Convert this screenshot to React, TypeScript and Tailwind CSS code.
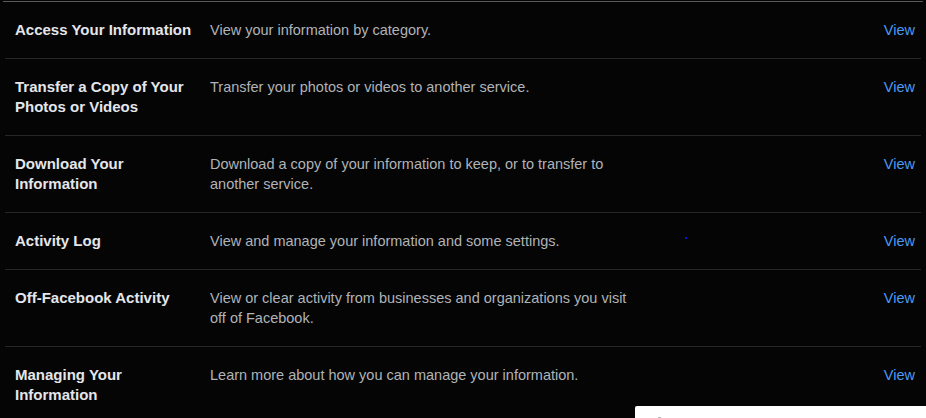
const rows = [
  { title: 'Access Your Information', desc: 'View your information by category.' },
  { title: 'Transfer a Copy of Your Photos or Videos', desc: 'Transfer your photos or videos to another service.' },
  { title: 'Download Your Information', desc: 'Download a copy of your information to keep, or to transfer to another service.' },
  { title: 'Activity Log', desc: 'View and manage your information and some settings.' },
  { title: 'Off-Facebook Activity', desc: 'View or clear activity from businesses and organizations you visit off of Facebook.' },
  { title: 'Managing Your Information', desc: 'Learn more about how you can manage your information.' },
];

export default function App() {
  return (
    <div className="relative w-[926px] h-[418px] overflow-hidden bg-[#050505] font-['Liberation_Sans',Arial,sans-serif] leading-[20px]">
      <div className="mx-[3px] mt-px border-t border-[#5a5a5a]">
        {rows.map((r, i) => (
          <div
            key={r.title}
            className={`mx-[2px] flex items-start pt-[18px] pb-[18px] ${i < rows.length - 1 ? 'border-b border-[#262626]' : ''}`}
          >
            <div className="w-[205px] shrink-0 pl-[10px] pr-[14px] text-[15px] font-bold text-[#e4e6eb]">{r.title}</div>
            <div className="w-[430px] shrink-0 text-[14.5px] text-[#b0b3b8]">{r.desc}</div>
            <a href="#" className="ml-auto mr-[6px] text-[14.5px] text-[#4c9bf2]">View</a>
          </div>
        ))}
      </div>
      {/* stray cursor dot */}
      <div className="absolute left-[685px] top-[237px] w-[2px] h-[2px] bg-[#1010d0]" />
      {/* popup peeking in at the bottom */}
      <div className="absolute left-[635px] top-[406px] w-[300px] h-[20px] bg-white rounded-tl-[2px]">
        <div className="absolute left-[23px] top-[11px] w-[3px] h-[2px] bg-[#b8b8b8]" />
      </div>
    </div>
  );
}
